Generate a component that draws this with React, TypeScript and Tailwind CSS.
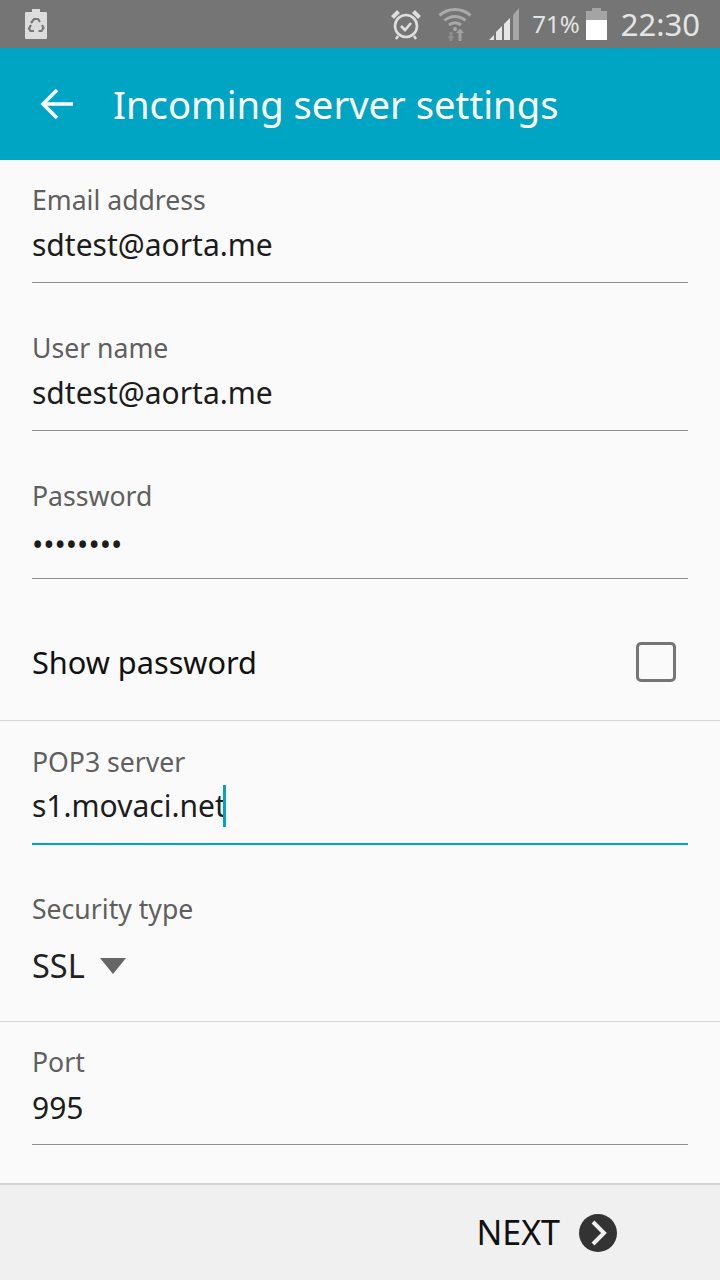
const font = "font-['Noto_Sans','Roboto',sans-serif]";

function RecycleBattery() {
  return (
    <svg width="24" height="32" viewBox="0 0 24 32">
      <path d="M8 1h8v3h6a1 1 0 0 1 1 1v25a1 1 0 0 1-1 1H2a1 1 0 0 1-1-1V5a1 1 0 0 1 1-1h6z" fill="#dcdcdc" />
      <g fill="none" stroke="#777" strokeWidth="2.2">
        <path d="M7 15l3-4h4l2 3" />
        <path d="M18 17l1.5 3-2 3h-3" />
        <path d="M10 23H6.500l-1.500-2.500 2-3.500" />
      </g>
    </svg>
  );
}

function Alarm() {
  return (
    <svg width="32" height="32" viewBox="0 0 32 32" fill="none" stroke="#dedede">
      <circle cx="16" cy="18" r="11" strokeWidth="2.600" />
      <path d="M11 18l4 4 6-7" strokeWidth="2.600" />
      <path d="M2.500 9.500l6-6" strokeWidth="4" />
      <path d="M29.500 9.500l-6-6" strokeWidth="4" />
      <path d="M8 28l-2 3M24 28l2 3" strokeWidth="2.400" />
    </svg>
  );
}

function Wifi() {
  return (
    <svg width="34" height="36" viewBox="0 0 34 36" fill="none" stroke="#a9a9a9">
      <path d="M1.500 9.500C10 1.500 24 1.500 32.500 9.500" strokeWidth="3" />
      <path d="M6.500 14.500C12.500 9 21.500 9 27.500 14.500" strokeWidth="3" />
      <path d="M11 19c3.500-3 8.500-3 12 0" strokeWidth="3" />
      <circle cx="17" cy="23" r="2" fill="#a9a9a9" stroke="none" />
      <path d="M13 26v9" strokeWidth="3" stroke="#8e8e8e" />
      <path d="M9.500 30.500l3.500 4.500 3.500-4.500z" fill="#8e8e8e" stroke="none" />
      <path d="M22 35v-10" strokeWidth="3" stroke="#a2a2a2" />
      <path d="M18 27l4-4.500 4 4.500z" fill="#a2a2a2" stroke="none" />
    </svg>
  );
}

function Signal() {
  return (
    <svg width="32" height="34" viewBox="0 0 32 34">
      <path d="M1 33l5-5v5z" fill="#e6e6e6" />
      <path d="M8 33V25l6-6v14z" fill="#e6e6e6" />
      <path d="M16 33V17l6-6v22z" fill="#e6e6e6" />
      <path d="M25 33V8l6-7v32z" fill="#a6a6a6" />
    </svg>
  );
}

function Battery() {
  return (
    <svg width="21" height="32" viewBox="0 0 21 32">
      <path d="M6 0h9v3h6v9H0V3h6z" fill="#a4a4a4" />
      <rect x="0" y="12" width="21" height="20" fill="#ffffff" />
    </svg>
  );
}

function Field({ label, value, masked }: { label: string; value: string; masked?: boolean }) {
  return (
    <div className="mx-8 h-[123px] border-b border-[#8f8f8f]">
      <div className="pt-[22px] text-[26.6px] leading-[36px] text-[#5f5f5f]">{label}</div>
      <div
        className={
          masked
            ? "mt-[11px] text-[30px] leading-[40px] text-[#1c1c1c]"
            : "mt-[7px] text-[30px] leading-[40px] text-[#1c1c1c]"
        }
      >
        {value}
      </div>
    </div>
  );
}

export default function App() {
  return (
    <div className={`flex h-[1280px] w-[720px] flex-col overflow-hidden bg-[#fafafa] ${font}`}>
      {/* status bar */}
      <div className="flex h-12 shrink-0 items-center bg-[#757575] pl-6 pr-5">
        <RecycleBattery />
        <div className="ml-auto flex items-center">
          <Alarm />
          <div className="ml-[16px]"><Wifi /></div>
          <div className="ml-[16px]"><Signal /></div>
          <span className="ml-[12px] text-[24px] text-[#e4e4e4]">71%</span>
          <div className="ml-[6px]"><Battery /></div>
          <span className="ml-[14px] text-[31px] text-[#e4e4e4]">22:30</span>
        </div>
      </div>

      {/* action bar */}
      <div className="flex h-28 shrink-0 items-center bg-[#00a5c4] pl-10">
        <svg width="34" height="32" viewBox="0 0 34 32" fill="none" stroke="#fff" strokeWidth="3.500">
          <path d="M33 16H3" />
          <path d="M17 2L3 16l14 14" />
        </svg>
        <h1 className="ml-[39px] pt-[2px] text-[38.2px] font-normal text-white">Incoming server settings</h1>
      </div>

      {/* form */}
      <div className="flex-1">
        <div className="flex flex-col gap-[25px]">
          <Field label="Email address" value="sdtest@aorta.me" />
          <Field label="User name" value="sdtest@aorta.me" />
          <Field label="Password" value="••••••••" masked />
        </div>

        <div className="flex h-[142px] items-center justify-between border-b border-[#d6d6d6] pl-8 pr-11">
          <span className="pt-[26px] text-[30.7px] text-[#111]">Show password</span>
          <span className="mt-[24px] h-10 w-10 rounded-[5px] border-[3px] border-[#757575]" />
        </div>

        <div className="mx-8 h-[124px] border-b-2 border-[#00a5c4]">
          <div className="pt-[23px] text-[26.6px] leading-[36px] text-[#5f5f5f]">POP3 server</div>
          <div className="mt-[5px] flex items-center text-[30px] leading-[40px] text-[#1c1c1c]">
            s1.movaci.net
            <span className="-ml-[3px] h-[42px] w-[3px] bg-[#00a5c4]" />
          </div>
        </div>

        <div className="h-[177px] border-b border-[#d6d6d6] px-8">
          <div className="pt-[46px] text-[26.6px] leading-[36px] text-[#5f5f5f]">Security type</div>
          <div className="mt-[18px] flex items-center text-[32.5px] leading-[42px] text-[#222]">
            SSL
            <svg className="ml-[15px]" width="26" height="16" viewBox="0 0 26 16">
              <path d="M0 0h26L13 16z" fill="#666" />
            </svg>
          </div>
        </div>

        <div className="mx-8 h-[123px] border-b border-[#8f8f8f]">
          <div className="pt-[22px] text-[26.6px] leading-[36px] text-[#5f5f5f]">Port</div>
          <div className="mt-[8px] text-[30px] leading-[40px] text-[#1c1c1c]">995</div>
        </div>
      </div>

      {/* footer */}
      <div className="flex h-[97px] shrink-0 items-center justify-end border-t-2 border-[#d4d4d4] bg-[#f0f0f0] pr-[103px]">
        <span className="text-[34px] text-[#111]">NEXT</span>
        <svg className="ml-[19px]" width="38" height="38" viewBox="0 0 38 38">
          <circle cx="19" cy="19" r="19" fill="#333" />
          <path d="M14 8l11 11-11 11" fill="none" stroke="#f0f0f0" strokeWidth="4" />
        </svg>
      </div>
    </div>
  );
}
